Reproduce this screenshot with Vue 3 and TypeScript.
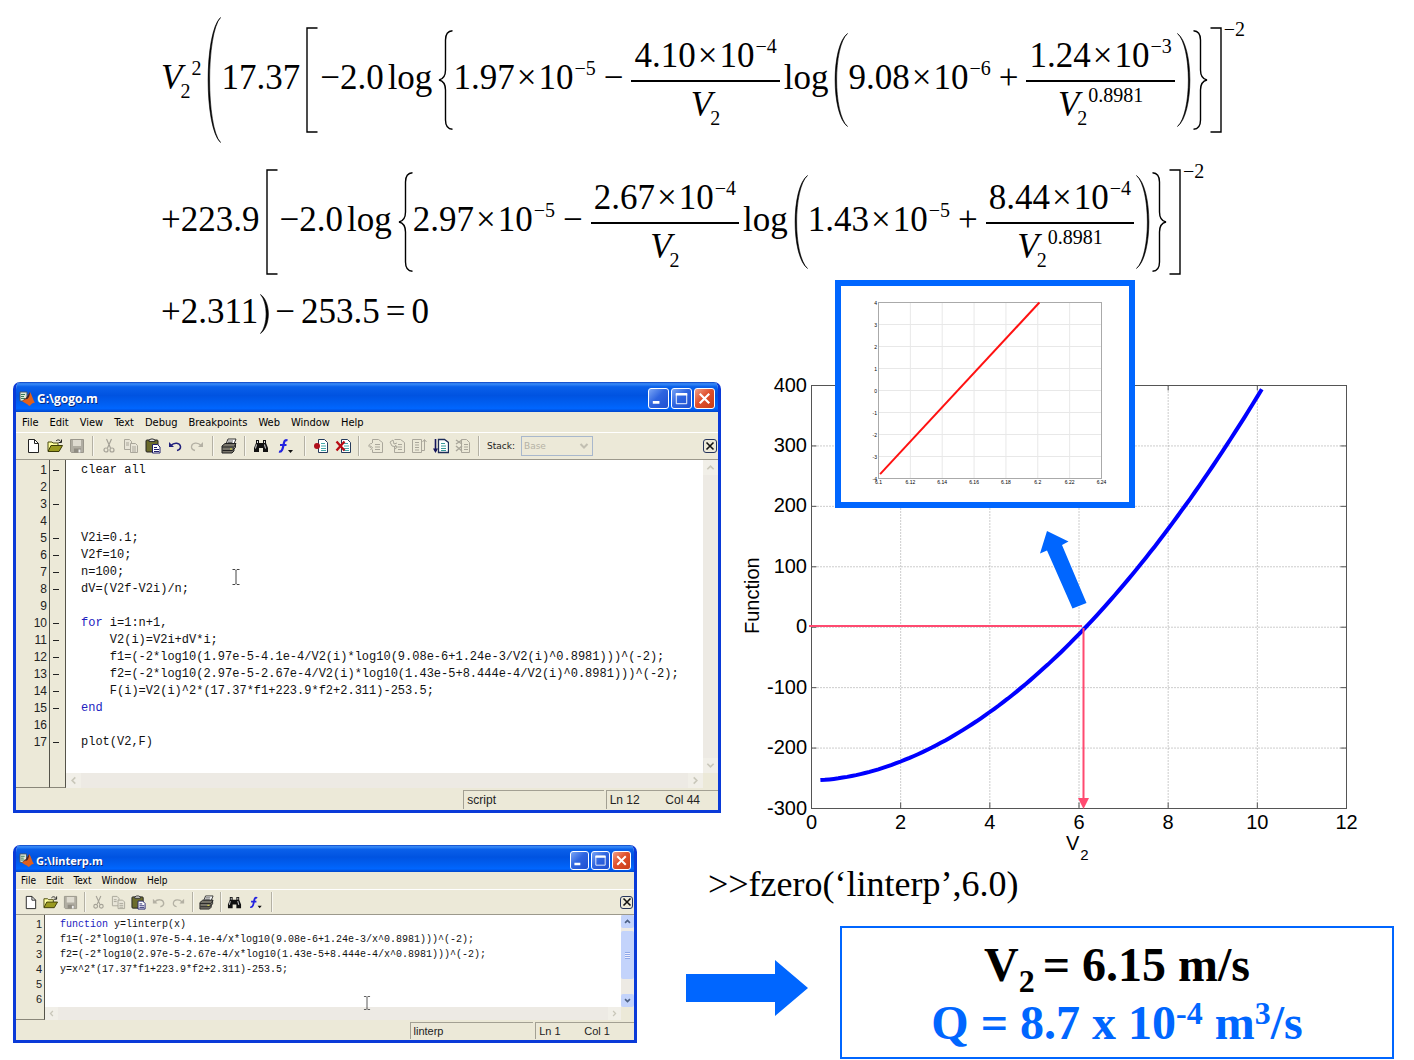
<script setup lang="ts">
interface CodeLine {
  keyword?: string
  text: string
  mark?: boolean
}

interface Tool {
  icon: string
  label: string
  dim?: boolean
}

interface EditorWindow {
  id: string
  title: string
  menus: string[]
  tools: Tool[]
  stack: boolean
  lines: CodeLine[]
  marks: boolean
  status: string
  line: string
  column: string
}

const sep: Tool = { icon: 'sep', label: '' }

const baseTools = (undoDim: boolean): Tool[] => [
  { icon: 'new', label: 'New' },
  { icon: 'open', label: 'Open' },
  { icon: 'save', label: 'Save', dim: true },
  sep,
  { icon: 'cut', label: 'Cut', dim: true },
  { icon: 'copy', label: 'Copy', dim: true },
  { icon: 'paste', label: 'Paste' },
  { icon: 'undo', label: 'Undo', dim: undoDim },
  { icon: 'redo', label: 'Redo', dim: true },
  sep,
  { icon: 'print', label: 'Print' },
  sep,
  { icon: 'find', label: 'Find' },
  { icon: 'func', label: 'Show functions' },
  sep,
]

const editors: EditorWindow[] = [
  {
    id: 'gogo',
    title: 'G:\\gogo.m',
    menus: ['File', 'Edit', 'View', 'Text', 'Debug', 'Breakpoints', 'Web', 'Window', 'Help'],
    tools: [
      ...baseTools(false),
      { icon: 'bpset', label: 'Set breakpoint' },
      { icon: 'bpclear', label: 'Clear breakpoints' },
      sep,
      { icon: 'step', label: 'Step', dim: true },
      { icon: 'stepin', label: 'Step in', dim: true },
      { icon: 'stepout', label: 'Step out', dim: true },
      { icon: 'run', label: 'Run' },
      { icon: 'quit', label: 'Exit debug mode', dim: true },
      sep,
    ],
    stack: true,
    marks: true,
    lines: [
      { text: 'clear all', mark: true },
      { text: '' },
      { text: '', mark: true },
      { text: '' },
      { text: 'V2i=0.1;', mark: true },
      { text: 'V2f=10;', mark: true },
      { text: 'n=100;', mark: true },
      { text: 'dV=(V2f-V2i)/n;', mark: true },
      { text: '' },
      { keyword: 'for', text: ' i=1:n+1,', mark: true },
      { text: '    V2(i)=V2i+dV*i;', mark: true },
      { text: '    f1=(-2*log10(1.97e-5-4.1e-4/V2(i)*log10(9.08e-6+1.24e-3/V2(i)^0.8981)))^(-2);', mark: true },
      { text: '    f2=(-2*log10(2.97e-5-2.67e-4/V2(i)*log10(1.43e-5+8.444e-4/V2(i)^0.8981)))^(-2);', mark: true },
      { text: '    F(i)=V2(i)^2*(17.37*f1+223.9*f2+2.311)-253.5;', mark: true },
      { keyword: 'end', text: '', mark: true },
      { text: '' },
      { text: 'plot(V2,F)', mark: true },
    ],
    status: 'script',
    line: 'Ln 12',
    column: 'Col 44',
  },
  {
    id: 'linterp',
    title: 'G:\\linterp.m',
    menus: ['File', 'Edit', 'Text', 'Window', 'Help'],
    tools: baseTools(true),
    stack: false,
    marks: false,
    lines: [
      { keyword: 'function', text: ' y=linterp(x)' },
      { text: 'f1=(-2*log10(1.97e-5-4.1e-4/x*log10(9.08e-6+1.24e-3/x^0.8981)))^(-2);' },
      { text: 'f2=(-2*log10(2.97e-5-2.67e-4/x*log10(1.43e-5+8.444e-4/x^0.8981)))^(-2);' },
      { text: 'y=x^2*(17.37*f1+223.9*f2+2.311)-253.5;' },
      { text: '' },
      { text: '' },
    ],
    status: 'linterp',
    line: 'Ln 1',
    column: 'Col 1',
  },
]

interface Term {
  lead: string
  first: string
  firstExp: string
  num: string
  numExp: string
  second: string
  secondExp: string
  num2: string
  num2Exp: string
}

const terms: Term[] = [
  { lead: '17.37', first: '1.97', firstExp: '−5', num: '4.10', numExp: '−4', second: '9.08', secondExp: '−6', num2: '1.24', num2Exp: '−3' },
  { lead: '+223.9', first: '2.97', firstExp: '−5', num: '2.67', numExp: '−4', second: '1.43', secondExp: '−5', num2: '8.44', num2Exp: '−4' },
]

/* Main plot: axes box inside the drawing, in user units */
const box = { left: 90.5, right: 625.5, top: 3.5, bottom: 426.5 }
const px = (v: number): number => box.left + (v / 12) * (box.right - box.left)
const py = (f: number): number => box.top + ((400 - f) / 700) * (box.bottom - box.top)
const xTicks = [0, 2, 4, 6, 8, 10, 12]
const yTicks = [400, 300, 200, 100, 0, -100, -200, -300]

const residual = (v: number): number => {
  const w = Math.pow(v, 0.8981)
  const f1 = Math.pow(-2 * Math.log10(1.97e-5 - (4.1e-4 / v) * Math.log10(9.08e-6 + 1.24e-3 / w)), -2)
  const f2 = Math.pow(-2 * Math.log10(2.97e-5 - (2.67e-4 / v) * Math.log10(1.43e-5 + 8.444e-4 / w)), -2)
  return v * v * (17.37 * f1 + 223.9 * f2 + 2.311) - 253.5
}

const curve = Array.from({ length: 100 }, (_, i) => {
  const v = 0.2 + i * 0.1
  return `${px(v).toFixed(1)},${py(residual(v)).toFixed(1)}`
}).join(' ')

/* Close-up around the root */
const zoomBox = { left: 157.5, right: 380.5, top: -79.5, bottom: 96.5 }
const zx = (v: number): number => zoomBox.left + ((v - 6.1) / 0.14) * (zoomBox.right - zoomBox.left)
const zy = (f: number): number => zoomBox.top + ((4 - f) / 8) * (zoomBox.bottom - zoomBox.top)
const zxTicks = [6.1, 6.12, 6.14, 6.16, 6.18, 6.2, 6.22, 6.24]
const zyTicks = [4, 3, 2, 1, 0, -1, -2, -3, -4]
</script>

<template>
  <svg class="defs" aria-hidden="true">
    <symbol id="i-new" viewBox="0 0 16 16"><path d="M3.5 1.5h6l4 4v9h-10z" fill="#fff" stroke="#222" /><path d="M9.500 1.500v4h4" fill="none" stroke="#222" /></symbol>
    <symbol id="i-open" viewBox="0 0 16 16"><path d="M1 13V4h4l1 1h5v3" fill="#ffffa0" stroke="#4a4a10" /><path d="M1 13.500l3-6h11.500l-3.500 6z" fill="#9a9a20" stroke="#3c3c08" /><path d="M9 3c2-2 4-1 5 1M14.500 1.500v3h-3" fill="none" stroke="#222" /></symbol>
    <symbol id="i-save" viewBox="0 0 16 16"><path d="M1.500 1.500h13v13h-12l-1-1z" fill="#b0ada2" stroke="#9a978c" /><path d="M4 2h8v6H4z" fill="#dedbd0" /><path d="M5 10.500h7v4H5z" fill="#8f8c82" /><path d="M9.500 11.500h2v3h-2z" fill="#eee" /></symbol>
    <symbol id="i-cut" viewBox="0 0 16 16"><g fill="none" stroke="#a5a297" stroke-width="1.200"><path d="M5.500 1l4 9M10.500 1l-4 9" /><circle cx="5" cy="12" r="2" /><circle cx="11" cy="12" r="2" /></g></symbol>
    <symbol id="i-copy" viewBox="0 0 16 16"><g fill="#e8e5d8" stroke="#aaa79b"><path d="M1.500 1.500h5l2 2v8h-7z" /><path d="M7.500 5.500h5l2 2v7h-7z" /><path d="M3 5h3M3 7h3M9 9h4M9 11h4M9 13h4" /></g></symbol>
    <symbol id="i-paste" viewBox="0 0 16 16"><rect x="1" y="2" width="12" height="12" rx="1" fill="#6b6b2c" stroke="#222" /><path d="M4 3.500V2l2-1h2l2 1v1.500z" fill="#ddd" stroke="#333" /><path d="M7.500 6.500h5l2.500 2.500v6H7.500z" fill="#fff" stroke="#20206c" /><path d="M9 9.500h3M9 11.500h5M9 13.500h5" stroke="#20206c" /></symbol>
    <symbol id="i-undo" viewBox="0 0 16 16"><path d="M2 4v5h5z" fill="currentColor" /><path d="M4 7.500c3-3.500 9-3 9.500 1 .2 2-1.500 3.500-3.500 4" fill="none" stroke="currentColor" stroke-width="1.500" /></symbol>
    <symbol id="i-redo" viewBox="0 0 16 16"><path d="M14 4v5H9z" fill="currentColor" /><path d="M12 7.500C9 4 3 4.500 2.500 8.500c-.2 2 1.500 3.500 3.500 4" fill="none" stroke="currentColor" stroke-width="1.300" /></symbol>
    <symbol id="i-print" viewBox="0 0 16 16"><path d="M5 6l2-5h8l-2 5z" fill="#fff" stroke="#333" /><path d="M7 3h5M6.500 4.500h5" stroke="#666" /><path d="M1 8l3-2.500h11L13 9v4l-2 2H1z" fill="#77746a" stroke="#222" /><path d="M1 9h11.500M1.500 12.500h10l3-3V6" fill="none" stroke="#222" /><path d="M9 11h2" stroke="#e8e840" /></symbol>
    <symbol id="i-find" viewBox="0 0 16 16"><path d="M3 2h3v3h4V2h3v3l2 5v4h-5v-4H6v4H1v-4l2-5z" fill="#111" /><path d="M3.500 6.500l-1 4M11.500 6.500l1 4M4.500 3v2M11.500 3v2" stroke="#ddd" /></symbol>
    <symbol id="i-func" viewBox="0 0 22 16"><path d="M12.500 2.500C9.500 1 9 4 8.500 7S7 14.500 4 13.500M5 7h6.500" fill="none" stroke="#2323e0" stroke-width="2.200" /><path d="M13 12h5l-2.500 3z" fill="#111" /></symbol>
    <symbol id="i-bpset" viewBox="0 0 16 16"><path d="M5.500 1.500h6l3 3v10h-9z" fill="#fff" stroke="#243a5c" /><path d="M8 5.500h4M8 8h5M8 10.500h5M8 12.500h5" stroke="#4aa" /><circle cx="4" cy="8" r="3" fill="#b0101c" /></symbol>
    <symbol id="i-bpclear" viewBox="0 0 16 16"><path d="M6.500 1.500h6l3 3v10h-9z" fill="#fff" stroke="#243a5c" /><path d="M9 5.500h4M9 8h5M9 10.500h5M9 12.500h5" stroke="#4aa" /><path d="M1.500 3.500l8 9M9.500 3.500l-8 9" stroke="#b80c14" stroke-width="2.300" /></symbol>
    <symbol id="i-step" viewBox="0 0 16 16"><g fill="none" stroke="#aaa79b"><path d="M5.500 1.500h6l4 3v10h-10v-3M5.500 5V1.500M8 6.500h5M8 9h5M8 11.500h5" /><path d="M5 5.500c-4 0-4 4-1 4M2.500 7.500l3 2-2 2.500" /></g></symbol>
    <symbol id="i-stepin" viewBox="0 0 16 16"><g fill="none" stroke="#aaa79b"><path d="M5.500 1.500h6l4 3v10h-10V9M9 6.500h4M9 9h4M9 11.500h4" /><path d="M1 4l3-2 1 4 3-1M1 4l2 4 5 1M6 7l2.500 2L6 11" /></g></symbol>
    <symbol id="i-stepout" viewBox="0 0 16 16"><g fill="none" stroke="#aaa79b"><path d="M10.500 14.500h-9v-13h9zM4 4.500h4M4 7h4M4 9.500h4M4 12h4" /><path d="M10.500 12.500h3V2M11.500 4l2-2.500 2 2.500" /></g></symbol>
    <symbol id="i-run" viewBox="0 0 16 16"><path d="M5.500 1.500h6l4 3v10h-10z" fill="#fff" stroke="#1c2c58" stroke-width="1.300" /><path d="M8 5.500h4M8 8h5M8 10.500h5M8 12.500h5" stroke="#3a9a9a" /><path d="M2.500 1v12" stroke="#14145c" stroke-width="1.600" /><path d="M0 10.500h5L2.500 15z" fill="#14145c" /></symbol>
    <symbol id="i-quit" viewBox="0 0 16 16"><g fill="none" stroke="#aaa79b"><path d="M6.500 1.500h5l3 3v10h-8zM9 6.500h4M9 9h4M9 11.500h4" /><path d="M1 2l6 4M7 2L1 6M1 8l6 5M7 8l-6 5" stroke-width="1.500" /></g></symbol>
    <symbol id="i-logo" viewBox="0 0 16 16"><path d="M1 1h7v9H1z" fill="#dfe8d8" stroke="#456" /><path d="M2 3.500h4M2 5.500h3M2 7.500h4" stroke="#3a7a5a" /><path d="M3 10l4-3 4-6c2 3 3 8 5 11-3-1-4 3-6 3-1-2-3-2-7-5z" fill="#e0601c" /><path d="M3 10l4-3 4-6c0 4-2 8-4 7z" fill="#3c2430" /></symbol>
  </svg>

  <main class="page">
    <section class="equation" aria-label="Governing equation">
      <div v-for="(t, i) in terms" :key="t.lead" class="row">
        <template v-if="i === 0">
          <span class="t"><i>V</i><sub>2</sub><sup>2</sup></span>
          <svg class="delim paren-big" viewBox="0 0 14 126"><path d="M13.500 .5C-3 16-3 110 13.500 125.500-1 109-1 17 13.500 .5z" /></svg>
        </template>
        <span class="t">{{ t.lead }}</span>
        <svg class="delim bracket" viewBox="0 0 12 106"><path d="M11.500 1H1v104h10.500" /></svg>
        <span class="t">−2.0</span>
        <span class="t log">log</span>
        <svg class="delim brace" viewBox="0 0 15 100"><path d="M14.500 .7C9.500 1 7.500 4 7.500 10v30c0 6-2 9-6.500 10 4.500 1 6.500 4 6.500 10v30c0 6 2 9 7 9.300" /></svg>
        <span class="t">{{ t.first }}<b class="times">×</b>10<sup>{{ t.firstExp }}</sup></span>
        <span class="t op">−</span>
        <span class="frac">
          <span class="num">{{ t.num }}<b class="times">×</b>10<sup>{{ t.numExp }}</sup></span>
          <span class="den"><i>V</i><sub>2</sub></span>
        </span>
        <span class="t log">log</span>
        <svg class="delim paren" viewBox="0 0 14 94"><path d="M13.500 .5C-3 13-3 81 13.500 93.500-1 80-1 14 13.500 .5z" /></svg>
        <span class="t">{{ t.second }}<b class="times">×</b>10<sup>{{ t.secondExp }}</sup></span>
        <span class="t op">+</span>
        <span class="frac">
          <span class="num">{{ t.num2 }}<b class="times">×</b>10<sup>{{ t.num2Exp }}</sup></span>
          <span class="den"><i>V</i><sub>2</sub><sup>0.8981</sup></span>
        </span>
        <svg class="delim paren close" viewBox="0 0 14 94"><path d="M.5 .5C17 13 17 81 .5 93.500 15 80 15 14 .5 .5z" /></svg>
        <svg class="delim brace close" viewBox="0 0 15 100"><path d="M.5 .7C5.500 1 7.500 4 7.500 10v30c0 6 2 9 6.500 10-4.500 1-6.500 4-6.500 10v30c0 6-2 9-7 9.300" /></svg>
        <span class="power">
          <svg class="delim bracket close" viewBox="0 0 12 106"><path d="M.5 1H11v104H.5" /></svg>
          <span class="exp">−2</span>
        </span>
      </div>
      <div class="row last">
        <span class="t">+2.311</span>
        <svg class="delim paren-small close" viewBox="0 0 9 40"><path d="M.5 .5C11 8 11 32 .5 39.500 8 31 8 9 .5 .5z" /></svg>
        <span class="t tight">−</span>
        <span class="t tight">253.5</span>
        <span class="t tight">=</span>
        <span class="t tight">0</span>
      </div>
    </section>

    <div class="board">
      <article v-for="w in editors" :key="w.id" class="window" :class="w.id">
        <header class="titlebar">
          <svg class="logo"><use href="#i-logo" /></svg>
          <h2>{{ w.title }}</h2>
          <button type="button" class="cap" aria-label="Minimize"><svg viewBox="0 0 20 20"><path d="M4 14h7" stroke="#fff" stroke-width="3" /></svg></button>
          <button type="button" class="cap" aria-label="Maximize"><svg viewBox="0 0 20 20"><path d="M4.500 5h11v10.500h-11z" fill="none" stroke="#fff" /><path d="M4 5.500h12" stroke="#fff" stroke-width="2.500" /></svg></button>
          <button type="button" class="cap cap-close" aria-label="Close"><svg viewBox="0 0 20 20"><path d="M5 5l10 10M15 5L5 15" stroke="#fff" stroke-width="2.300" /></svg></button>
        </header>
        <nav class="menubar">
          <button v-for="m in w.menus" :key="m" type="button">{{ m }}</button>
        </nav>
        <div class="toolbar">
          <template v-for="(tool, k) in w.tools" :key="k">
            <span v-if="tool.icon === 'sep'" class="sep"></span>
            <button v-else type="button" class="tool" :class="[tool.icon, { dim: tool.dim }]" :aria-label="tool.label">
              <svg><use :href="'#i-' + tool.icon" /></svg>
            </button>
          </template>
          <template v-if="w.stack">
            <label for="stack">Stack:</label>
            <span class="select">
              <select id="stack" disabled><option>Base</option></select>
              <svg viewBox="0 0 10 8"><path d="M1.500 2l3.500 3.500L8.500 2" fill="none" stroke="#c2bfb2" stroke-width="2" /></svg>
            </span>
          </template>
          <button type="button" class="dock" aria-label="Close document"><svg viewBox="0 0 10 10"><path d="M1.500 1.500l7 7M8.500 1.500l-7 7" stroke="#111" stroke-width="1.600" /></svg></button>
        </div>
        <div class="editor">
          <div class="numbers"><span v-for="(l, n) in w.lines" :key="n">{{ n + 1 }}</span></div>
          <div v-if="w.marks" class="marks"><span v-for="(l, n) in w.lines" :key="n"><i v-if="l.mark"></i></span></div>
          <div class="pane">
            <div class="view">
              <pre class="code"><span v-for="(l, n) in w.lines" :key="n" class="line"><em v-if="l.keyword">{{ l.keyword }}</em>{{ l.text }}</span></pre>
              <svg class="ibeam" viewBox="0 0 8 16"><path d="M.5 .5h2.500l1 1 1-1h2.500M4 1.500v13M.5 15.500h2.500l1-1 1 1h2.500" fill="none" stroke="#444" /></svg>
              <div class="vscroll">
                <svg viewBox="0 0 10 8"><path d="M1.500 6L5 2.500 8.500 6" /></svg>
                <span class="thumb"></span>
                <svg viewBox="0 0 10 8"><path d="M1.500 2L5 5.500 8.500 2" /></svg>
              </div>
            </div>
            <div class="hscroll">
              <svg viewBox="0 0 8 10"><path d="M6 1.500L2.500 5 6 8.500" /></svg>
              <svg viewBox="0 0 8 10"><path d="M2 1.500L5.500 5 2 8.500" /></svg>
            </div>
          </div>
        </div>
        <footer class="status">
          <span class="cell name">{{ w.status }}</span>
          <span class="cell pos"><span>{{ w.line }}</span><span>{{ w.column }}</span></span>
        </footer>
      </article>

      <svg class="chart" viewBox="0 0 673 463" role="img" aria-label="Function against V2">
        <g class="grid">
          <line v-for="v in xTicks.slice(1, -1)" :key="'x' + v" :x1="px(v)" :x2="px(v)" :y1="box.top" :y2="box.bottom" />
          <line v-for="f in yTicks.slice(1, -1)" :key="'y' + f" :x1="box.left" :x2="box.right" :y1="py(f)" :y2="py(f)" />
        </g>
        <g class="axis">
          <rect :x="box.left" :y="box.top" :width="box.right - box.left" :height="box.bottom - box.top" />
          <path v-for="v in xTicks" :key="'x' + v" :d="`M${px(v)} ${box.top}v5M${px(v)} ${box.bottom}v-6`" />
          <path v-for="f in yTicks" :key="'y' + f" :d="`M${box.left} ${py(f)}h5M${box.right} ${py(f)}h-6`" />
        </g>
        <g class="labels">
          <text v-for="f in yTicks" :key="'y' + f" x="86" :y="py(f) + 6" text-anchor="end">{{ f }}</text>
          <text v-for="v in xTicks" :key="'x' + v" :x="px(v)" y="447" text-anchor="middle">{{ v }}</text>
          <text x="345" y="468">V<tspan class="small" dx="1" dy="10">2</tspan></text>
          <text transform="translate(38 252) rotate(-90)">Function</text>
        </g>
        <polyline class="curve" :points="curve" />
        <path class="root" d="M88 244h273M362.500 246v172" />
        <path d="M357 416h11l-5.500 11z" fill="#ff4a70" />
        <path d="M326 149l21.500 10.500-6.500 3.500 24.500 58-14 5.500-25.500-58-7 3z" fill="#06f" />
        <g class="inset">
          <rect class="frame" x="117" y="-99" width="294" height="222" />
          <g class="faint">
            <line v-for="v in zxTicks" :key="'x' + v" :x1="zx(v)" :x2="zx(v)" :y1="zoomBox.top" :y2="zoomBox.bottom" />
            <line v-for="f in zyTicks" :key="'y' + f" :x1="zoomBox.left" :x2="zoomBox.right" :y1="zy(f)" :y2="zy(f)" />
          </g>
          <rect class="inner" :x="zoomBox.left" :y="zoomBox.top" :width="zoomBox.right - zoomBox.left" :height="zoomBox.bottom - zoomBox.top" />
          <g class="tiny">
            <text v-for="f in zyTicks" :key="'y' + f" x="156" :y="zy(f) + 2" text-anchor="end">{{ f }}</text>
            <text v-for="v in zxTicks" :key="'x' + v" :x="zx(v)" y="102" text-anchor="middle">{{ v }}</text>
          </g>
          <line class="close-up" :x1="zx(6.101)" :y1="zy(-3.8)" :x2="zx(6.201)" :y2="zy(4)" />
        </g>
      </svg>

      <section class="answer">
        <p class="call">&gt;&gt;fzero(‘linterp’,6.0)</p>
        <div class="outcome">
          <svg class="arrow" viewBox="0 0 122 56"><path d="M0 14h89V0l33 28-33 28V42H0z" fill="#06f" /></svg>
          <div class="result">
            <p>V<sub>2 </sub>= 6.15 m/s</p>
            <p class="flow">Q = 8.7 x 10<sup>-4</sup> m<sup>3</sup>/s</p>
          </div>
        </div>
      </section>
    </div>
  </main>
</template>

<style>
body {
  margin: 0;
  background: #fff;
}
</style>

<style scoped>
.defs {
  position: absolute;
  width: 0;
  height: 0;
}
.page {
  padding: 17px 20px 0 13px;
  color: #000;
  font-family: 'Liberation Serif', 'Times New Roman', serif;
}
button {
  padding: 0;
  border: 0;
  background: none;
  color: inherit;
  font: inherit;
}
svg {
  display: block;
  flex: none;
}
p,
h2,
pre {
  margin: 0;
}

/* Equation */
.equation {
  padding-left: 148px;
  font-size: 35px;
  line-height: 34px;
  white-space: nowrap;
}
.row {
  display: flex;
  align-items: center;
  margin-bottom: 26px;
}
.row + .row {
  margin-bottom: 19px;
}
.row.last {
  margin-bottom: 0;
}
.t {
  padding-bottom: 4px;
}
.equation sup,
.equation sub {
  font-size: 20px;
  line-height: 0;
}
.equation sup {
  margin-left: 1px;
  vertical-align: 14px;
}
.equation sub {
  margin-left: -2px;
  vertical-align: -9px;
}
.times {
  margin: 0 2px;
  font-weight: 400;
}
.log {
  margin-left: 4px;
}
.op {
  margin: 0 8px;
}
.tight {
  margin-left: 6px;
}
.delim {
  margin-left: 6px;
  fill: none;
  stroke: #000;
  stroke-width: 1.4;
}
.delim.close {
  margin-left: 2px;
}
.paren-big {
  width: 14px;
  height: 126px;
}
.paren {
  width: 14px;
  height: 94px;
}
.paren-small {
  width: 9px;
  height: 40px;
}
.paren-big,
.paren,
.paren-small {
  fill: #000;
  stroke-width: 0.6;
}
.bracket {
  width: 12px;
  height: 106px;
  margin-right: 2px;
}
.brace {
  width: 15px;
  height: 100px;
}
.frac {
  display: flex;
  flex-direction: column;
  align-items: center;
}
.num {
  padding: 0 3px 7px;
  border-bottom: 2px solid #000;
}
.den {
  padding-top: 6px;
}
.power {
  display: flex;
  align-items: flex-start;
}
.exp {
  margin-top: -8px;
  font-size: 20px;
  line-height: 20px;
}

/* Windows, plot and answer */
.board {
  display: grid;
  grid-template-columns: minmax(0, 624fr) minmax(0, 49fr) minmax(0, 35fr) minmax(0, 673fr);
  align-items: start;
  margin-top: 48px;
}
.gogo {
  grid-area: 1 / 1 / 2 / 4;
}
.linterp {
  grid-area: 2 / 1 / 3 / 2;
}
.chart {
  grid-area: 1 / 4 / 2 / 5;
  width: 100%;
  overflow: visible;
}
.answer {
  grid-area: 2 / 3 / 3 / 5;
}

.window {
  --icon: 16px;
  --gap: 6px;
  --title: 30px;
  --heading: 12px;
  --cap: 21px;
  --menu: 20px;
  --bar: 28px;
  --pitch: 17px;
  --code: 12px;
  --label: 12px;
  --ui: 11px;
  --scroll: 15px;
  --foot: 22px;
  overflow: hidden;
  border: 3px solid #0a3ad8;
  border-top: 0;
  border-radius: 7px 7px 0 0;
  background: #ece9d8;
  font-family: 'Liberation Sans', Arial, sans-serif;
}
.window.linterp {
  --icon: 15px;
  --gap: 5px;
  --title: 27px;
  --heading: 11px;
  --cap: 19px;
  --menu: 17px;
  --bar: 26px;
  --pitch: 15px;
  --code: 10px;
  --label: 11px;
  --ui: 10px;
  --scroll: 13px;
  --foot: 20px;
}
.titlebar {
  display: flex;
  align-items: center;
  gap: 2px;
  height: var(--title);
  margin: 0 -3px;
  padding: 3px 6px 0 6px;
  box-sizing: border-box;
  background: linear-gradient(#0a3fc0, #3a8cf8 6%, #0a60ea 16%, #0053e1 45%, #0060f4 75%, #0066ff 88%, #0046cc);
  color: #fff;
}
.logo {
  width: var(--icon);
  height: var(--icon);
}
.titlebar h2 {
  flex: 1;
  font: 700 var(--heading) 'Open Sans', 'Noto Sans', sans-serif;
  text-shadow: 1px 1px #0a2a80;
}
.cap {
  width: var(--cap);
  height: var(--cap);
  box-sizing: border-box;
  border: 1px solid #fff;
  border-radius: 3px;
  background: linear-gradient(135deg, #7aa5f5, #2f65e0 45%, #1f4fd0);
}
.cap-close {
  background: linear-gradient(135deg, #f0a088, #e0502c 45%, #c83c18);
}
.menubar {
  display: flex;
  align-items: center;
  gap: 11px;
  height: var(--menu);
  padding-left: 6px;
  font: var(--ui) 'DejaVu Sans Condensed', 'DejaVu Sans', sans-serif;
}
.linterp .menubar {
  gap: 10px;
  padding-left: 5px;
}
.toolbar {
  display: flex;
  align-items: center;
  gap: var(--gap);
  height: var(--bar);
  padding-left: 9px;
  box-sizing: border-box;
  border-top: 1px solid #fff;
  border-bottom: 1px solid #9c998c;
}
.linterp .toolbar {
  padding-left: 7px;
}
.tool svg {
  width: var(--icon);
  height: var(--icon);
}
.tool.func svg {
  width: 22px;
}
.linterp .tool.func svg {
  width: 18px;
}
.tool {
  color: #20207c;
}
.tool.dim {
  color: #b4b1a4;
}
.sep {
  width: 4px;
  height: 20px;
  box-sizing: border-box;
  background: linear-gradient(90deg, transparent 1px, #b4b1a4 1px 2px, #f8f7f0 2px 3px, transparent 3px);
}
.linterp .sep {
  width: 3px;
}
.toolbar label {
  color: #222;
  font: 9px 'DejaVu Sans', sans-serif;
}
.select {
  position: relative;
}
.select select {
  display: block;
  width: 72px;
  height: 20px;
  padding: 0 2px;
  border: 1px solid #a9b8cc;
  border-radius: 0;
  background: #ece9d8;
  color: #b5b2a5;
  font: 9px 'DejaVu Sans', sans-serif;
  opacity: 1;
  appearance: none;
}
.select svg {
  position: absolute;
  top: 6px;
  right: 4px;
  width: 10px;
  height: 8px;
}
.dock {
  display: grid;
  place-items: center;
  width: 14px;
  height: 14px;
  margin: 0 1px 0 auto;
  box-sizing: border-box;
  border: 1px solid #26355c;
  border-radius: 3px;
}
.dock svg {
  width: 10px;
  height: 10px;
}
.linterp .dock {
  width: 13px;
  height: 13px;
}
.editor {
  display: flex;
  line-height: var(--pitch);
}
.numbers,
.marks {
  display: flex;
  flex-direction: column;
  box-sizing: border-box;
  padding-top: 2px;
  border-right: 1px solid #55534a;
  border-bottom: 1px solid #8a877a;
}
.numbers {
  width: 34px;
  padding-right: 2px;
  color: #222;
  font-size: var(--label);
  text-align: right;
}
.linterp .numbers {
  width: 29px;
}
.marks {
  width: 16px;
}
.marks span {
  display: flex;
  align-items: center;
  height: var(--pitch);
  padding-left: 3px;
}
.marks i {
  width: 6px;
  height: 1px;
  background: #222;
}
.pane {
  flex: 1;
  min-width: 0;
}
.view {
  position: relative;
  display: flex;
  background: #fff;
}
.code {
  flex: 1;
  min-width: 0;
  overflow: hidden;
  padding: 2px 0 22px 15px;
  color: #111;
  font: var(--code) / var(--pitch) 'Liberation Mono', 'Courier New', monospace;
}
.linterp .code {
  padding-bottom: 0;
}
.line {
  display: block;
  height: var(--pitch);
}
.code em {
  color: #2222c0;
  font-style: normal;
}
.ibeam {
  position: absolute;
  top: 109px;
  left: 166px;
  width: 8px;
  height: 16px;
}
.linterp .ibeam {
  top: 81px;
  left: 318px;
  height: 14px;
}
.vscroll {
  display: flex;
  flex-direction: column;
  justify-content: space-between;
  width: var(--scroll);
  background: #edeae4;
}
.vscroll svg,
.hscroll svg {
  width: var(--scroll);
  height: var(--scroll);
  padding: 3px;
  box-sizing: border-box;
  background: #f1efe8;
  fill: none;
  stroke: #c9c7ba;
  stroke-width: 1.8;
}
.linterp .vscroll svg {
  border-radius: 2px;
  background: #c3d3fb;
  stroke: #4d6185;
  stroke-width: 2.4;
}
.thumb {
  flex: 1;
}
.linterp .thumb {
  flex: 0 0 48px;
  margin-bottom: 12px;
  border-radius: 2px;
  background: repeating-linear-gradient(#8ea8e8 0 1px, #eef 1px 2px) center / 5px 7px no-repeat #c3d3fb;
}
.hscroll {
  display: flex;
  justify-content: space-between;
  margin-right: var(--scroll);
  background: #edeae4;
}
.status {
  display: flex;
  justify-content: flex-end;
  gap: 2px;
  height: var(--foot);
  padding: 2px 0 1px;
  box-sizing: border-box;
  color: #222;
  font-size: var(--label);
}
.cell {
  display: flex;
  align-items: center;
  padding-left: 3px;
  box-sizing: border-box;
  border-top: 1px solid #a3a093;
  border-left: 1px solid #a3a093;
}
.name {
  width: 20%;
}
.pos {
  justify-content: space-between;
  width: 16%;
  padding-right: 18px;
}
.linterp .pos {
  padding-right: 24px;
}

.grid line {
  stroke: #999;
  stroke-dasharray: 1 2;
}
.axis {
  fill: none;
  stroke: #555;
}
.labels {
  font: 20px 'Liberation Sans', Arial, sans-serif;
}
.labels .small {
  font-size: 15px;
}
.curve {
  fill: none;
  stroke: #00f;
  stroke-width: 4;
}
.root {
  fill: none;
  stroke: #ff4a70;
  stroke-width: 2;
}
.frame {
  fill: #fff;
  stroke: #06f;
  stroke-width: 6;
}
.inset .inner {
  fill: none;
  stroke: #aaa;
}
.faint line {
  stroke: #e8e8e8;
}
.tiny {
  font: 5px 'Liberation Sans', Arial, sans-serif;
}
.close-up {
  stroke: #f11;
  stroke-width: 2;
}

.call {
  padding: 18px 0 0 22px;
  font-size: 36px;
  line-height: 42px;
}
.outcome {
  display: flex;
  align-items: center;
  gap: 32px;
  margin-top: 21px;
}
.arrow {
  width: 122px;
  height: 56px;
  margin-bottom: 10px;
}
.result {
  flex: 1;
  padding: 8px 0 5px;
  border: 2px solid #06f;
  font-size: 48px;
  font-weight: 700;
  line-height: 58px;
  text-align: center;
}
.result sub,
.result sup {
  font-size: 32px;
  line-height: 0;
}
.result sub {
  vertical-align: -11px;
}
.result sup {
  vertical-align: 15px;
}
.flow {
  color: #06f;
}
</style>
